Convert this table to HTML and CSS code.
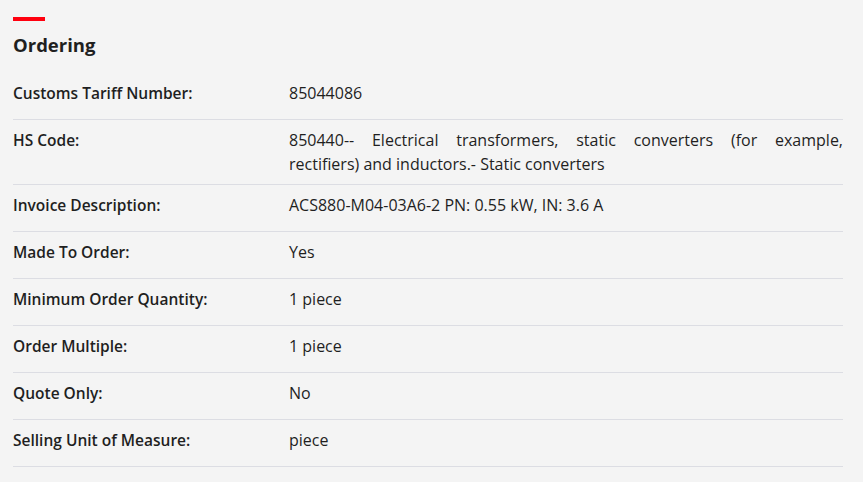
FILE: index.html
```html
<!DOCTYPE html>
<html lang="en">
<head>
<meta charset="utf-8">
<title>Ordering</title>
<link rel="stylesheet" href="styles.css">
</head>
<body>
<section class="section">
  <div class="accent"></div>
  <h2 class="title">Ordering</h2>
  <div class="table">
    <div class="row"><div class="label">Customs Tariff Number:</div><div class="value">85044086</div></div>
    <div class="row"><div class="label">HS Code:</div><div class="value justify">850440-- Electrical transformers, static converters (for example, rectifiers)&nbsp;and inductors.- Static converters</div></div>
    <div class="row"><div class="label">Invoice Description:</div><div class="value">ACS880-M04-03A6-2 PN: 0.55 kW, IN: 3.6 A</div></div>
    <div class="row"><div class="label">Made To Order:</div><div class="value">Yes</div></div>
    <div class="row"><div class="label">Minimum Order Quantity:</div><div class="value">1 piece</div></div>
    <div class="row"><div class="label">Order Multiple:</div><div class="value">1 piece</div></div>
    <div class="row"><div class="label">Quote Only:</div><div class="value">No</div></div>
    <div class="row"><div class="label">Selling Unit of Measure:</div><div class="value">piece</div></div>
  </div>
</section>
</body>
</html>
```
FILE: styles.css
```css
html, body {
  margin: 0;
  padding: 0;
  background: #f4f4f4;
}
body {
  font-family: "Open Sans", "Noto Sans", sans-serif;
  color: #1f1f1f;
}
.section {
  padding: 17px 20px 0 13px;
}
.accent {
  width: 32px;
  height: 4px;
  background: #ff000f;
}
.title {
  margin: 12px 0 0;
  font-size: 18.5px;
  font-weight: 700;
  line-height: 24px;
}
.table {
  margin-top: 16px;
}
.row {
  display: grid;
  grid-template-columns: 276px 1fr;
  padding: 8px 0;
  min-height: 47px;
  box-sizing: border-box;
  border-bottom: 1px solid #dcdde3;
  font-size: 16px;
  line-height: 24px;
}
.label {
  font-size: 15.5px;
  font-weight: 600;
}
.justify {
  text-align: justify;
}
```
